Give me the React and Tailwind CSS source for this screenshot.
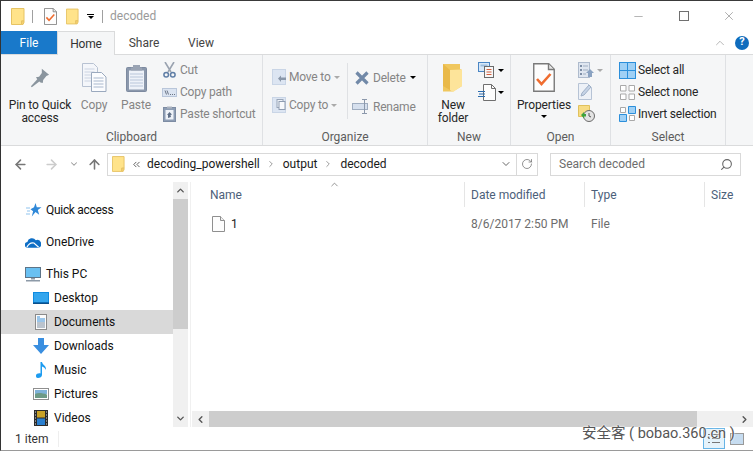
import React from 'react';
import { ChevronUp, ChevronDown, ChevronLeft, ChevronRight, ChevronsLeft, ArrowLeft, ArrowRight, ArrowUp, RotateCw, Search, Minus, X } from 'lucide-react';

const FolderSmall = ({ w = 14, h = 17 }) => (
  <svg width={w} height={h} viewBox="0 0 14 17">
    <path d="M.5.5h12.5v12.5h-2.500v3.500H.5z" fill="#ffe38a" stroke="#e6c363" />
    <path d="M10.500 16.500v-3.500h2.500v1.500l-1 2z" fill="#f5d070" stroke="#e6c363" />
  </svg>
);

const CheckDoc = ({ w = 13, h = 17, sw = 1.4 }) => (
  <svg width={w} height={h} viewBox="0 0 22 29">
    <path d="M.75.75h15l5.500 5.500v22h-20.500z" fill="#fdfdfd" stroke="#7a7a7a" strokeWidth={sw} />
    <path d="M15.500 1v5.500H21" fill="#e8e8e8" stroke="#7a7a7a" strokeWidth={sw} />
    <path d="M4 16l4.500 5 9-10" fill="none" stroke="#ef6c2f" strokeWidth="2.600" />
  </svg>
);

const PinIcon = () => (
  <svg width="20" height="20" viewBox="0 0 22 24" preserveAspectRatio="none" className="mb-[4px]">
    <path d="M13 1l8 7-3 1.500-3.500 5-.5 3.500-2.500-.5L8 13.500 6.500 11l3.500-.5 3-4.500z" fill="#8a959e" />
    <path d="M8.500 13L1 22l1 1 9-7.500z" fill="#8a959e" />
  </svg>
);

const CopyIcon = () => (
  <svg width="25" height="29" viewBox="0 0 25 29">
    <path d="M.5.5h11l4 4v19H.5z" fill="#f4f6fa" stroke="#b8c2d2" />
    <path d="M2.500 6h10M2.500 9h10M2.500 12h10M2.500 15h10M2.500 18h10" stroke="#ccd4e2" />
    <path d="M9.500 9.500h10l4.500 4.500v14.500H9.500z" fill="#fbfcfe" stroke="#9aa9be" />
    <path d="M11.500 15h10M11.500 18h10M11.500 21h10M11.500 24h10" stroke="#a9b8cd" />
  </svg>
);

const PasteIcon = () => (
  <svg width="21" height="28" viewBox="0 0 21 28">
    <rect x=".5" y="3.500" width="20" height="24" rx="1" fill="#8b98ac" stroke="#7d8aa0" />
    <rect x="3" y="6.500" width="15" height="19" fill="#eef2f9" />
    <path d="M4 10h13M4 13h13M4 16h13M4 19h13M4 22h13" stroke="#b9c6da" />
    <path d="M7 3.500V1h7v2.500h2v3H5v-3z" fill="#9aa4b4" />
  </svg>
);

const CutIcon = () => (
  <svg width="13" height="16" viewBox="0 0 13 16">
    <path d="M2 0l6 10M11 0L5 10" stroke="#9aa3b0" strokeWidth="1.600" />
    <circle cx="3.200" cy="12.800" r="2.300" fill="none" stroke="#5f7ea6" strokeWidth="1.500" />
    <circle cx="9.800" cy="12.800" r="2.300" fill="none" stroke="#5f7ea6" strokeWidth="1.500" />
  </svg>
);

const CopyPathIcon = () => (
  <svg width="15" height="9" viewBox="0 0 15 9">
    <rect x=".5" y=".5" width="14" height="8" fill="#dbe4f1" stroke="#b9c6da" />
    <path d="M3 2.500l1.500 4M5 2.500l1.500 4M8 6.500h1M10 6.500h1M12 6.500h1" stroke="#6b7585" />
  </svg>
);

const PasteShortcutIcon = () => (
  <svg width="13" height="16" viewBox="0 0 13 16">
    <rect x=".5" y="1.500" width="12" height="14" fill="#8d9db4" stroke="#7d8ca3" />
    <rect x="2.500" y="4" width="8" height="9.500" fill="#eef2f8" />
    <path d="M4 .5h5v2H4z" fill="#aab2bf" />
    <path d="M5 12V9h-1l2.500-3L9 8.500 7.500 9l.5 2z" fill="#5f6f87" />
  </svg>
);

const MoveToIcon = () => (
  <svg width="14" height="16" viewBox="0 0 14 16">
    <rect x=".5" y=".5" width="13" height="15" fill="#dce5f2" stroke="#c9d5e6" />
    <path d="M6 9.500l3-3v2h5v2.500H9v2z" fill="#8a98aa" />
  </svg>
);

const CopyToIcon = () => (
  <svg width="14" height="16" viewBox="0 0 14 16">
    <rect x=".5" y=".5" width="13" height="15" fill="#dce5f2" stroke="#c9d5e6" />
    <rect x="5" y="2.500" width="6" height="8" fill="#eef2f8" stroke="#98a5b8" />
    <rect x="7" y="4.500" width="6" height="8" fill="#f7f9fc" stroke="#8f9db1" />
  </svg>
);

const DeleteIcon = () => (
  <svg width="14" height="14" viewBox="0 0 14 14">
    <path d="M1.500 1.500l11 11M12.500 1.500l-11 11" stroke="#7189a8" strokeWidth="3.200" />
  </svg>
);

const RenameIcon = () => (
  <svg width="18" height="15" viewBox="0 0 18 15" className="ml-[-3px] shrink-0">
    <rect x=".5" y="4.500" width="15" height="6" fill="#d6e0ee" stroke="#9fadc0" />
    <path d="M10 .5h5M10 14.500h5M12.500 .5v14" stroke="#8b98ab" />
  </svg>
);

const NewFolderIcon = () => (
  <svg width="20" height="28" viewBox="0 0 20 28">
    <path d="M0 0h17v5l2 1v16l-9 5.500H0z" fill="#f0c75e" />
    <path d="M7 6l12-.500v16.500l-9 6-3-2z" fill="#fde49a" />
    <path d="M0 0l7 6v20L0 22z" fill="#e9b949" />
  </svg>
);

const NewItemIcon = () => (
  <svg width="19" height="16" viewBox="0 0 19 16">
    <rect x=".5" y=".5" width="11" height="9" fill="#d7e7f7" stroke="#4a86c5" />
    <rect x="2.500" y="2.500" width="7" height="2" fill="#9dbddd" />
    <rect x="6.500" y="4.500" width="9" height="11" fill="#f7f7f7" stroke="#6a6a6a" />
    <path d="M8.500 7.500h5M8.500 10h5M8.500 12.500h5" stroke="#d35f3e" />
  </svg>
);

const EasyAccessIcon = () => (
  <svg width="19" height="17" viewBox="0 0 19 17">
    <path d="M5.500.5h8l4 4v12h-12z" fill="#fdfdfd" stroke="#6f6f6f" />
    <path d="M13.500 .5v4h4" fill="none" stroke="#6f6f6f" />
    <path d="M0 7.500h7M1 10h6M0 12.500h7" stroke="#2a6cb0" />
  </svg>
);

const PropsSmall = () => (
  <svg width="17" height="16" viewBox="0 0 17 16">
    <rect x=".5" y=".5" width="11" height="15" fill="#dfe6f0" stroke="#aebbcd" />
    <path d="M2 3h2v2H2zM2 7h2v2H2zM2 11h2v2H2z" fill="#7d8ea6" />
    <path d="M5 4h5M5 8h5M5 12h3" stroke="#9fadc0" />
    <path d="M12 7l4 4h-2v4h-4v-4H8z" fill="#8ba3c2" />
  </svg>
);

const EditSmall = () => (
  <svg width="15" height="17" viewBox="0 0 15 17">
    <path d="M.5.5h9l4 4v12H.5z" fill="#edf1f7" stroke="#b6c3d5" />
    <path d="M3 13l1-3L11 2l2 2-7 8z" fill="#c5d3e6" stroke="#9fb0c7" />
  </svg>
);

const HistoryIcon = () => (
  <svg width="17" height="17" viewBox="0 0 17 17">
    <path d="M.5.500h11v11H.5z" fill="#f7dc84" stroke="#e0c15d" />
    <circle cx="11" cy="11" r="5.500" fill="#e3e3e3" stroke="#6a6a6a" />
    <path d="M11 8v3l2 1" stroke="#555" fill="none" />
    <path d="M3 10l3-3v2h2v2.500H6v2z" fill="#3da33d" />
  </svg>
);

const SelectAllIcon = () => (
  <svg width="17" height="17" viewBox="0 0 17 17">
    <rect x=".5" y=".5" width="16" height="16" fill="#9fd0f5" stroke="#2b8fdb" />
    <path d="M8.500 0v17M0 8.500h17" stroke="#2b8fdb" />
  </svg>
);

const SelectNoneIcon = () => (
  <svg width="15" height="15" viewBox="0 0 15 15">
    <path d="M.5.500h5.500V6H.5zM9 .5h5.500V6H9zM.5 9h5.500v5.500H.5zM9 9h5.500v5.500H9z" fill="#fff" stroke="#a9a9a9" />
  </svg>
);

const InvertIcon = () => (
  <svg width="17" height="16" viewBox="0 0 17 16">
    <path d="M1.500 1.500h5v5h-5zM10.500 9.500h5v5h-5z" fill="#fff" stroke="#a9a9a9" />
    <path d="M9.500.5h7v7h-7zM.5 8.500h7v7h-7z" fill="#9fd0f5" stroke="#2b8fdb" />
  </svg>
);

const StarIcon = () => (
  <svg width="16" height="14" viewBox="0 0 16 14">
    <path d="M9.500 0l1.300 4.300H15.500l-3.700 2.800 1.400 4.600-3.700-2.800L5.800 13.500l1.300-5.200L4.500 6.300 8 4.300z" fill="#2f88d8" />
    <path d="M0 5h4M1 8h3M0 11h4" stroke="#8fc3ee" />
  </svg>
);

const CloudIcon = () => (
  <svg width="17" height="11" viewBox="0 0 17 11">
    <path d="M3 11a3 3 0 0 1-.5-6A5 5 0 0 1 11.500 3a3.800 3.800 0 0 1 3 8z" fill="#0f6fc6" />
    <path d="M2 10.500c2-4 5-5 7.500-4.500l5 4.500" fill="none" stroke="#fff" strokeWidth="1.200" />
  </svg>
);

const PcIcon = () => (
  <svg width="16" height="15" viewBox="0 0 16 15">
    <rect x=".5" y=".5" width="15" height="10" fill="#69c0f2" stroke="#5d7488" />
    <path d="M6 11h4v1.500H6zM1 13h14v1.500H1z" fill="#8d9aa8" />
  </svg>
);

const DesktopIcon = () => (
  <svg width="16" height="12" viewBox="0 0 16 12">
    <rect width="16" height="12" fill="#0f8be0" />
    <rect x="1" y="1" width="14" height="9" fill="#34a6ee" />
    <rect x="0" y="10.500" width="16" height="1.500" fill="#0b4f8a" />
  </svg>
);

const DocumentsIcon = () => (
  <svg width="12" height="16" viewBox="0 0 12 16">
    <rect x=".5" y=".5" width="11" height="15" fill="#fbfbfb" stroke="#8a8a8a" />
    <path d="M2 3h3M2 5h8M2 7h8" stroke="#3b90d8" />
    <path d="M2 9h8M2 11h8M2 13h8" stroke="#7a8ca0" />
  </svg>
);

const DownloadsIcon = () => (
  <svg width="16" height="16" viewBox="0 0 16 16">
    <path d="M5 0h6v7h5l-8 9-8-9h5z" fill="#3a8fe0" />
  </svg>
);

const MusicIcon = () => (
  <svg width="11" height="16" viewBox="0 0 11 16">
    <path d="M4.500 0h1.500c.5 3 4.500 3.500 4 8-.8-2-2.500-3-4-3.500V13c0 2-2 3-4 3S0 15 0 13.500 2.500 11 4.500 11.500z" fill="#1d9cf0" />
  </svg>
);

const PicturesIcon = () => (
  <svg width="16" height="12" viewBox="0 0 16 12">
    <rect x=".5" y=".5" width="15" height="11" fill="#fff" stroke="#8f8f8f" />
    <rect x="2" y="2" width="12" height="4" fill="#7fb2d8" />
    <path d="M2 6c3-1.500 7-1 12 .5V10H2z" fill="#6d9a86" />
  </svg>
);

const VideosIcon = () => (
  <svg width="14" height="16" viewBox="0 0 14 16">
    <rect width="14" height="16" fill="#2b2b2b" />
    <rect x="3" y="1" width="8" height="6.500" fill="#c9a227" />
    <rect x="3" y="8.500" width="8" height="6.500" fill="#2a7fd0" />
    <path d="M1 2h1M1 5h1M1 8h1M1 11h1M1 14h1M12 2h1M12 5h1M12 8h1M12 11h1M12 14h1" stroke="#ddd" />
  </svg>
);

const FileIcon = () => (
  <svg width="13" height="16" viewBox="0 0 13 16">
    <path d="M.5.5h8l4 4v11H.5z" fill="#fdfdfd" stroke="#8f8f8f" />
    <path d="M8.500 .5v4h4" fill="#f0f0f0" stroke="#8f8f8f" />
  </svg>
);

const Caret = ({ color = 'border-t-black' }) => (
  <span className={`inline-block w-0 h-0 border-x-[3px] border-x-transparent border-t-[3px] ${color}`} />
);

function BigButton({ icon, lines, muted, width, caret }) {
  return (
    <div className={`flex flex-col items-center shrink-0 ${width} ${muted ? 'text-[#858585]' : 'text-[#262626]'}`}>
      <div className="h-[39px] flex items-end justify-center pb-[7px]">{icon}</div>
      {lines.map((l) => (
        <span key={l} className="leading-[13px] whitespace-nowrap tracking-[-0.1px]">{l}</span>
      ))}
      {caret && <span className="mt-[3px] leading-[0] flex"><Caret /></span>}
    </div>
  );
}

function SmallRow({ icon, label, muted, iconWidth = 'w-[16px]', caret, gap = 'gap-[3px]', height = 'h-[22px]' }) {
  return (
    <div className={`flex items-center whitespace-nowrap tracking-[-0.2px] ${height} ${gap} ${muted ? 'text-[#858585]' : 'text-[#262626]'}`}>
      <span className={`flex items-center justify-center shrink-0 ${iconWidth}`}>{icon}</span>
      <span>{label}</span>
      {caret}
    </div>
  );
}

function Group({ label, width, children }) {
  return (
    <div className={`flex flex-col shrink-0 border-r border-[#dfe1e4] ${width}`}>
      <div className="flex-1 flex min-h-0">{children}</div>
      <div className="h-[15px] text-center text-[#5c5c5c] leading-[15px]">{label}</div>
    </div>
  );
}

function NavItem({ icon, label, indent, active, iconBox = 'w-[16px]', tight }) {
  return (
    <div className={`h-[24px] shrink-0 flex items-center text-[#111] ${indent} ${active ? 'bg-[#d9d9d9]' : ''}`}>
      <span className={`flex justify-center shrink-0 ${iconBox}`}>{icon}</span>
      <span className={tight ? 'ml-[4px] tracking-[-0.3px]' : 'ml-[5px]'}>{label}</span>
    </div>
  );
}

function HeaderCell({ label, width, border = true }) {
  return (
    <div className={`shrink-0 h-[25px] flex items-center pl-[6px] text-[#4c607a] ${width} ${border ? 'border-l border-[#e5e5e5]' : ''}`}>
      {label}
    </div>
  );
}

export default function App() {
  return (
    <div
      className="relative w-[753px] h-[451px] overflow-hidden bg-white flex flex-col text-[12px] border-l border-t border-l-[#333] border-t-[#3a3a3a] border-b border-b-[#9a9a9a]"
      style={{ fontFamily: 'Roboto, "Noto Sans CJK SC", sans-serif' }}
    >
      {/* Title bar */}
      <div className="h-[30px] shrink-0 flex items-center pl-[10px]">
        <FolderSmall />
        <span className="w-px h-[13px] bg-[#a0a0a0] ml-[7px] mr-[11px]" />
        <CheckDoc />
        <span className="ml-[9px]"><FolderSmall w={13} /></span>
        <span className="ml-[8px] flex flex-col items-center gap-[1px]">
          <span className="w-[7px] h-px bg-black" />
          <Caret />
        </span>
        <span className="w-px h-[13px] bg-[#a0a0a0] ml-[8px] mr-[7px]" />
        <span className="text-[#9a9a9a]">decoded</span>
        <div className="ml-auto flex items-center text-[#777] pr-[2px]">
          <span className="w-[45px] flex justify-center"><Minus size={13} strokeWidth={1} /></span>
          <span className="w-[45px] flex justify-center"><span className="w-[10px] h-[10px] border border-[#707070]" /></span>
          <span className="w-[45px] flex justify-center"><X size={14} strokeWidth={1} /></span>
        </div>
      </div>

      {/* Tabs */}
      <div className="h-[24px] shrink-0 flex items-stretch border-b border-[#dadbdc]">
        <div className="w-[56px] h-[23px] bg-[#1979ca] text-white flex items-center justify-center">File</div>
        <div className="w-[58px] h-[24px] bg-[#f5f6f7] border-x border-t border-[#dadbdc] flex items-center justify-center text-[#333] tracking-[-0.2px]">Home</div>
        <div className="w-[58px] flex items-center justify-center text-[#444]">Share</div>
        <div className="w-[56px] flex items-center justify-center text-[#444]">View</div>
        <div className="ml-auto flex items-center pr-[4px] gap-[8px]">
          <ChevronUp size={14} strokeWidth={1.2} className="text-[#999]" />
          <span className="w-[14px] h-[14px] rounded-full bg-[#0f6cbd] text-white text-[11px] font-bold flex items-center justify-center">?</span>
        </div>
      </div>

      {/* Ribbon */}
      <div className="h-[91px] shrink-0 flex bg-[#f5f6f7] border-b border-[#dadbdc]">
        <Group label="Clipboard" width="w-[262px]">
          <div className="flex pt-[5px]">
            <BigButton icon={<PinIcon />} lines={['Pin to Quick', 'access']} width="w-[78px]" />
            <BigButton icon={<CopyIcon />} lines={['Copy']} muted width="w-[30px]" />
            <BigButton icon={<PasteIcon />} lines={['Paste']} muted width="w-[54px]" />
            <div className="flex flex-col ml-[-2px] mt-[-1px]">
              <SmallRow icon={<CutIcon />} label="Cut" muted />
              <SmallRow icon={<CopyPathIcon />} label="Copy path" muted />
              <SmallRow icon={<PasteShortcutIcon />} label="Paste shortcut" muted />
            </div>
          </div>
        </Group>
        <Group label="Organize" width="w-[165px]">
          <div className="flex pt-[8px] pl-[9px]">
            <div className="flex flex-col w-[76px] h-[56px] border-r border-[#dfe1e4]">
              <SmallRow icon={<MoveToIcon />} label="Move to" muted iconWidth="w-[14px]" height="h-[29px]" gap="gap-[3px]" caret={<Caret color="border-t-[#aaa]" />} />
              <SmallRow icon={<CopyToIcon />} label="Copy to" muted iconWidth="w-[14px]" height="h-[29px]" gap="gap-[3px]" caret={<Caret color="border-t-[#aaa]" />} />
            </div>
            <div className="flex flex-col pl-[7px]">
              <SmallRow icon={<DeleteIcon />} label="Delete" muted iconWidth="w-[14px]" height="h-[29px]" gap="gap-[4px]" caret={<Caret />} />
              <SmallRow icon={<RenameIcon />} label="Rename" muted iconWidth="w-[14px]" height="h-[29px]" gap="gap-[4px]" />
            </div>
          </div>
        </Group>
        <Group label="New" width="w-[83px]">
          <div className="flex pt-[5px]">
            <BigButton icon={<NewFolderIcon />} lines={['New', 'folder']} width="w-[50px]" />
            <div className="flex flex-col gap-[6px] pt-[2px]">
              <span className="flex items-center gap-[1px]"><NewItemIcon /><Caret /></span>
              <span className="flex items-center gap-[1px]"><EasyAccessIcon /><Caret /></span>
            </div>
          </div>
        </Group>
        <Group label="Open" width="w-[100px]">
          <div className="flex pt-[5px] pl-[1px]">
            <BigButton icon={<CheckDoc w={22} h={29} />} lines={['Properties']} width="w-[64px]" caret />
            <div className="flex flex-col gap-[5px] pt-[2px] pl-[2px]">
              <span className="flex items-center gap-[2px]"><PropsSmall /><Caret color="border-t-[#aaa]" /></span>
              <EditSmall />
              <HistoryIcon />
            </div>
          </div>
        </Group>
        <Group label="Select" width="w-[115px]">
          <div className="flex flex-col pt-[4px] pl-[8px]">
            <SmallRow icon={<SelectAllIcon />} label="Select all" iconWidth="w-[17px]" gap="gap-[2px]" />
            <SmallRow icon={<SelectNoneIcon />} label="Select none" iconWidth="w-[17px]" gap="gap-[2px]" />
            <SmallRow icon={<InvertIcon />} label="Invert selection" iconWidth="w-[17px]" gap="gap-[2px]" />
          </div>
        </Group>
      </div>

      {/* Address bar */}
      <div className="h-[36px] shrink-0 flex items-center">
        <div className="w-[106px] shrink-0 flex items-center pl-[12px]">
          <ArrowLeft size={15} strokeWidth={2.5} className="text-[#777]" />
          <ArrowRight size={15} strokeWidth={2.5} className="text-[#ccc] ml-[16px]" />
          <ChevronDown size={10} strokeWidth={2.5} className="text-[#999] ml-[10px]" />
          <ArrowUp size={15} strokeWidth={2.5} className="text-[#777] ml-[8px]" />
        </div>
        <div className="w-[431px] h-[23px] shrink-0 border border-[#d9d9d9] flex items-center text-[#1a1a1a]">
          <span className="ml-[4px]"><FolderSmall w={13} h={18} /></span>
          <ChevronsLeft size={11} strokeWidth={1.8} className="text-[#444] ml-[6px] mr-[5px]" />
          <span>decoding_powershell</span>
          <ChevronRight size={10} strokeWidth={2} className="text-[#888] ml-[6px]" />
          <span className="ml-[7px]">output</span>
          <ChevronRight size={10} strokeWidth={2} className="text-[#888] ml-[6px]" />
          <span className="ml-[7px]">decoded</span>
          <ChevronDown size={12} strokeWidth={2} className="text-[#666] ml-auto mr-[4px]" />
          <span className="h-full w-[21px] border-l border-[#d9d9d9] flex items-center justify-center">
            <RotateCw size={12} strokeWidth={1.6} className="text-[#777]" />
          </span>
        </div>
        <div className="w-[191px] h-[23px] shrink-0 ml-[12px] border border-[#d9d9d9] flex items-center pl-[8px] pr-[7px] text-[#6d6d6d]">
          <span>Search decoded</span>
          <Search size={13} strokeWidth={2} className="ml-auto text-[#666] -scale-x-100" />
        </div>
      </div>

      {/* Main */}
      <div className="flex-1 min-h-0 flex">
        {/* Nav pane */}
        <div className="w-[172px] shrink-0 flex flex-col overflow-hidden pt-[16px]">
          <NavItem icon={<StarIcon />} label="Quick access" indent="pl-[25px]" tight />
          <div className="h-[8px] shrink-0" />
          <NavItem icon={<CloudIcon />} label="OneDrive" indent="pl-[24px]" />
          <div className="h-[8px] shrink-0" />
          <NavItem icon={<PcIcon />} label="This PC" indent="pl-[24px]" />
          <NavItem icon={<DesktopIcon />} label="Desktop" indent="pl-[32px]" />
          <NavItem icon={<DocumentsIcon />} label="Documents" indent="pl-[32px]" active />
          <NavItem icon={<DownloadsIcon />} label="Downloads" indent="pl-[32px]" />
          <NavItem icon={<MusicIcon />} label="Music" indent="pl-[32px]" />
          <NavItem icon={<PicturesIcon />} label="Pictures" indent="pl-[32px]" />
          <NavItem icon={<VideosIcon />} label="Videos" indent="pl-[32px]" />
        </div>

        {/* Nav scrollbar */}
        <div className="w-[15px] shrink-0 bg-[#f0f0f0] flex flex-col items-center">
          <span className="h-[17px] flex items-center justify-center"><ChevronUp size={11} strokeWidth={3} className="text-[#555]" /></span>
          <span className="w-full h-[130px] bg-[#cdcdcd]" />
          <span className="mt-auto h-[17px] flex items-center justify-center"><ChevronDown size={11} strokeWidth={3} className="text-[#555]" /></span>
        </div>

        <div className="w-[4px] shrink-0 border-r border-[#f0f0f0] mr-[1px] ml-[-1px]" />

        {/* File list */}
        <div className="flex-1 min-w-0 flex flex-col">
          <div className="relative flex shrink-0">
            <HeaderCell label={<span className="pl-[12px]">Name</span>} width="w-[272px]" border={false} />
            <HeaderCell label="Date modified" width="w-[120px]" />
            <HeaderCell label="Type" width="w-[120px]" />
            <HeaderCell label="Size" width="w-[49px]" />
            <ChevronUp size={11} strokeWidth={1.5} className="absolute left-[137px] top-[-3px] text-[#666]" />
          </div>
          <div className="flex h-[24px] mt-[5px] items-center shrink-0">
            <div className="w-[272px] shrink-0 flex items-center pl-[20px]">
              <FileIcon />
              <span className="ml-[6px] text-[#222]">1</span>
            </div>
            <div className="w-[120px] shrink-0 pl-[7px] text-[#6d6d6d]">8/6/2017 2:50 PM</div>
            <div className="w-[120px] shrink-0 pl-[7px] text-[#6d6d6d]">File</div>
          </div>

          {/* Horizontal scrollbar */}
          <div className="mt-auto h-[16px] shrink-0 bg-[#f0f0f0] flex items-center">
            <span className="w-[17px] flex justify-center"><ChevronLeft size={11} strokeWidth={3} className="text-[#555]" /></span>
            <span className="w-[488px] h-full bg-[#cdcdcd]" />
            <span className="ml-auto w-[17px] flex justify-center"><ChevronRight size={11} strokeWidth={3} className="text-[#555]" /></span>
          </div>
        </div>
      </div>

      {/* Status bar */}
      <div className="h-[23px] shrink-0 flex items-center pl-[14px] text-[#333]">
        <span className="w-[43px]">1 item</span>
        <span className="w-px h-[16px] bg-[#eee]" />
        <div className="ml-auto flex items-center pr-[9px]">
          <span className="w-[22px] h-[21px] border border-[#66b4e6] bg-[#e5f3fb] flex items-center justify-center">
            <svg width="14" height="12" viewBox="0 0 14 12">
              <path d="M1 1.500h2M1 5.500h2M1 9.500h2M5 1.500h8M5 5.500h8M5 9.500h8" stroke="#777" />
            </svg>
          </span>
          <span className="w-[14px] h-[12px] ml-[5px] border border-[#999] bg-[#c6dcf0]" />
        </div>
      </div>

      {/* Watermark over the corner */}
      <div className="absolute left-[581px] top-[424px] text-[14.5px] leading-[18px] whitespace-nowrap text-[#555] [text-shadow:0_0_2px_#fff,0_0_2px_#fff]">
        安全客 ( bobao.360.cn )
      </div>
    </div>
  );
}
